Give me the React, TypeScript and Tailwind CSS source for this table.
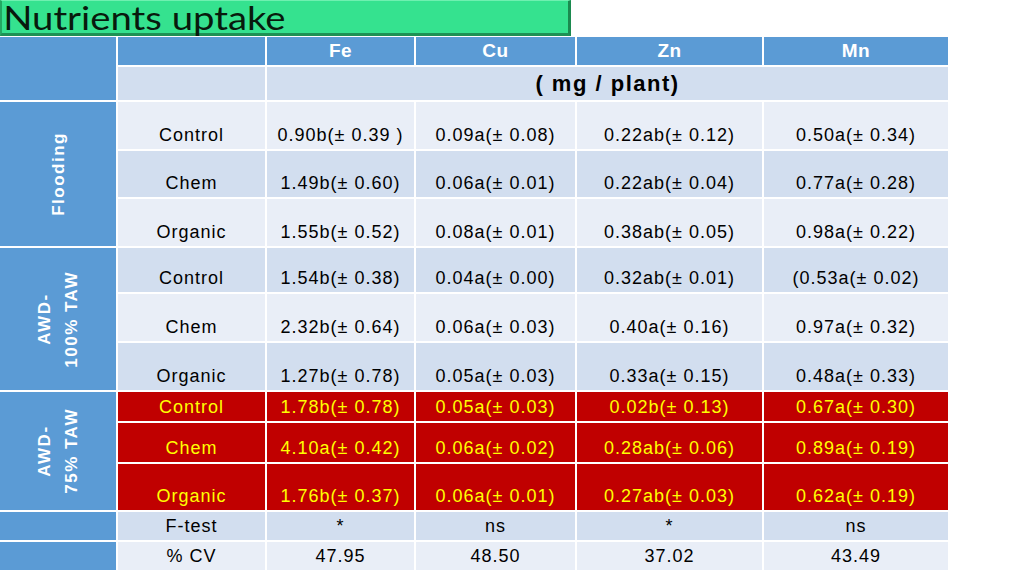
const groups = [
  {
    label: ["Flooding"],
    red: false,
    rows: [
      { name: "Control", vals: ["0.90b(± 0.39 )", "0.09a(± 0.08)", "0.22ab(± 0.12)", "0.50a(± 0.34)"] },
      { name: "Chem", vals: ["1.49b(± 0.60)", "0.06a(± 0.01)", "0.22ab(± 0.04)", "0.77a(± 0.28)"] },
      { name: "Organic", vals: ["1.55b(± 0.52)", "0.08a(± 0.01)", "0.38ab(± 0.05)", "0.98a(± 0.22)"] }
    ]
  },
  {
    label: ["AWD-", "100% TAW"],
    red: false,
    rows: [
      { name: "Control", vals: ["1.54b(± 0.38)", "0.04a(± 0.00)", "0.32ab(± 0.01)", "(0.53a(± 0.02)"] },
      { name: "Chem", vals: ["2.32b(± 0.64)", "0.06a(± 0.03)", "0.40a(± 0.16)", "0.97a(± 0.32)"] },
      { name: "Organic", vals: ["1.27b(± 0.78)", "0.05a(± 0.03)", "0.33a(± 0.15)", "0.48a(± 0.33)"] }
    ]
  },
  {
    label: ["AWD-", "75% TAW"],
    red: true,
    rows: [
      { name: "Control", vals: ["1.78b(± 0.78)", "0.05a(± 0.03)", "0.02b(± 0.13)", "0.67a(± 0.30)"] },
      { name: "Chem", vals: ["4.10a(± 0.42)", "0.06a(± 0.02)", "0.28ab(± 0.06)", "0.89a(± 0.19)"] },
      { name: "Organic", vals: ["1.76b(± 0.37)", "0.06a(± 0.01)", "0.27ab(± 0.03)", "0.62a(± 0.19)"] }
    ]
  }
];

const footer = [
  { name: "F-test", vals: ["*", "ns", "*", "ns"] },
  { name: "% CV", vals: ["47.95", "48.50", "37.02", "43.49"] }
];

const dark = "bg-[#d2deef]";
const light = "bg-[#e9eef7]";

function Cell({ text, bg, red }: { text: string; bg: string; red?: boolean }) {
  return (
    <div
      className={`flex items-end justify-center pb-[5px] text-[18px] leading-[18px] tracking-[1px] whitespace-pre ${
        red ? "bg-[#c00000] text-[#ffff00]" : `${bg} text-black`
      }`}
    >
      {text}
    </div>
  );
}

export default function App() {
  let stripe = 0;
  return (
    <div className="w-[1024px] h-[576px] bg-white overflow-hidden" style={{ fontFamily: '"Liberation Sans", Arial, sans-serif' }}>
      {/* title */}
      <div className="relative z-10 w-[571px] h-[36px] bg-[#35e28f] border-l-2 border-r-[3px] border-b-[3px] border-t border-l-[#23a862] border-r-[#1b8a4f] border-b-[#1e9155] border-t-[#6ef0b0]">
        <div
          className="inline-block origin-left scale-x-[1.16] pl-[1px] -mt-[2px] text-[33px] leading-[36px] text-[#081a0d] whitespace-nowrap"
          style={{ fontFamily: "Lato, sans-serif" }}
        >
          Nutrients uptake
        </div>
      </div>

      <div className="mt-[1px] w-[948px] grid grid-cols-[116px_147px_147px_159px_185px_184px] grid-rows-[28px_33px_47px_46px_47px_44px_47px_47px_29px_39px_46px_28px_28px] gap-[2px]">
        {/* header */}
        <div className="row-span-2 bg-[#5b9bd5]" />
        <div className="bg-[#5b9bd5]" />
        {["Fe", "Cu", "Zn", "Mn"].map((h) => (
          <div key={h} className="flex items-center justify-center bg-[#5b9bd5] text-white font-bold text-[19px] tracking-[0.5px]">
            {h}
          </div>
        ))}
        <div className={dark} />
        <div className={`col-span-4 flex items-center justify-center ${dark} font-bold text-[22px] tracking-[1.5px] text-black`}>
          ( mg / plant)
        </div>

        {groups.map((g, gi) =>
          g.rows.map((r, ri) => {
            const bg = stripe++ % 2 === 0 ? light : dark;
            return [
              ri === 0 ? (
                <div key={`l${gi}`} className="row-span-3 flex items-center justify-center bg-[#5b9bd5]">
                  <div className="[writing-mode:vertical-rl] rotate-180 text-center text-white font-bold text-[17px] leading-[27px] tracking-[1.5px] whitespace-nowrap">
                    {g.label.map((l) => (
                      <div key={l}>{l}</div>
                    ))}
                  </div>
                </div>
              ) : null,
              <Cell key={`n${gi}${ri}`} text={r.name} bg={bg} red={g.red} />,
              ...r.vals.map((v, vi) => <Cell key={`v${gi}${ri}${vi}`} text={v} bg={bg} red={g.red} />)
            ];
          })
        )}

        {footer.map((r, ri) => {
          const bg = ri === 0 ? dark : light;
          return [
            <div key={`fl${ri}`} className="bg-[#5b9bd5]" />,
            <Cell key={`fn${ri}`} text={r.name} bg={bg} />,
            ...r.vals.map((v, vi) => <Cell key={`fv${ri}${vi}`} text={v} bg={bg} />)
          ];
        })}
      </div>
    </div>
  );
}
